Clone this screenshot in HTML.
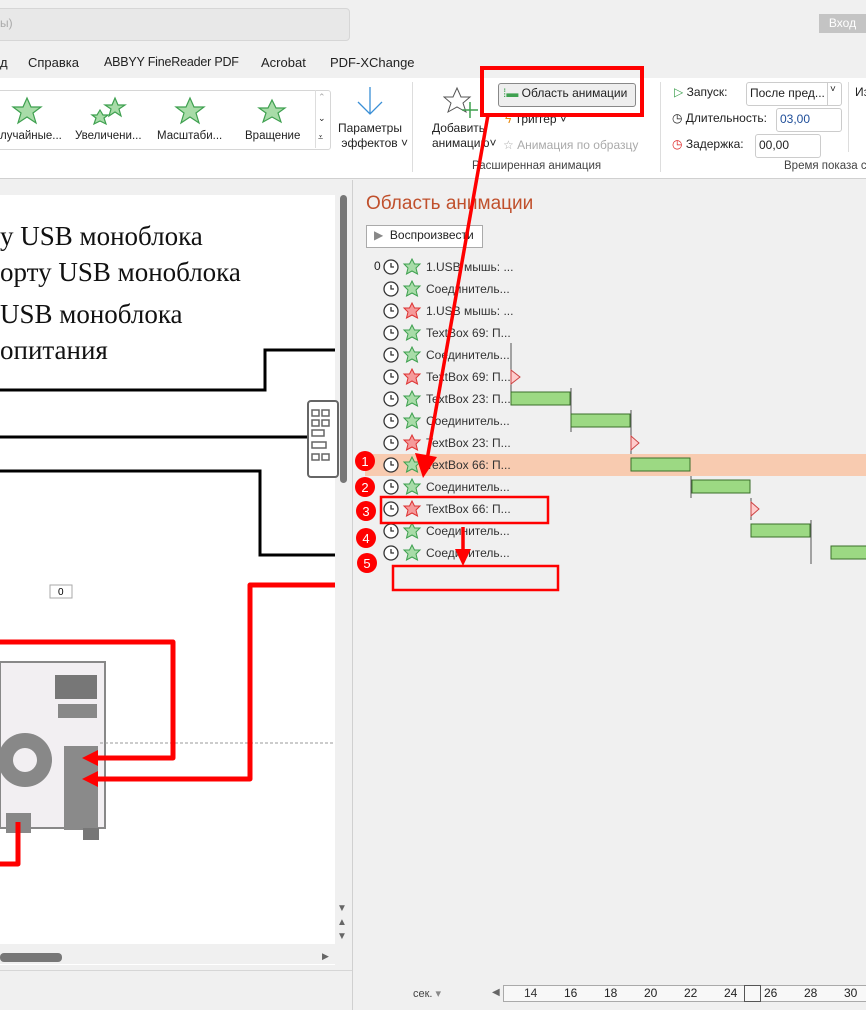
<!DOCTYPE html>
<html><head><meta charset="utf-8"><style>
body{margin:0;width:866px;height:1010px;position:relative;overflow:hidden;background:#f0f0f0;font-family:"Segoe UI","Liberation Sans","DejaVu Sans",sans-serif;font-size:12px;color:#222}
.a{position:absolute;white-space:nowrap}
</style></head><body>
<div class="a" style="left:-10px;top:8px;width:358px;height:31px;background:#e8e8e8;border:1px solid #d6d6d6;border-radius:4px"></div>
<div class="a" style="left:0;top:16px;color:#aaa;font-size:12px">ы)</div>
<div class="a" style="left:819px;top:14px;width:47px;height:19px;background:#c4c4c4;color:#fff;font-size:12px;text-align:center;line-height:19px">Вход</div>
<div class="a" style="left:0;top:55px;font-size:13px">д</div>
<div class="a" style="left:28px;top:55px;font-size:13px">Справка</div>
<div class="a" style="left:104px;top:55px;font-size:12.5px;letter-spacing:-0.2px">ABBYY FineReader PDF</div>
<div class="a" style="left:261px;top:55px;font-size:13px">Acrobat</div>
<div class="a" style="left:330px;top:55px;font-size:13px">PDF-XChange</div>
<div class="a" style="left:0;top:78px;width:866px;height:100px;background:#fff;border-bottom:1px solid #d0d0d0"></div>
<div class="a" style="left:-5px;top:90px;width:334px;height:58px;border:1px solid #d6d6d6;border-radius:3px;background:#fff"></div>
<div class="a" style="left:315px;top:90px;width:14px;height:58px;border-left:1px solid #ddd"></div>
<div class="a" style="left:318px;top:92px;font-size:9px;color:#aaa">⌃</div>
<div class="a" style="left:318px;top:113px;font-size:9px">⌄</div>
<div class="a" style="left:318px;top:132px;font-size:9px">⩡</div>
<svg class="a" style="left:0;top:95px" width="310" height="35" viewBox="0 0 310 35">
<g fill="#a8dca8" stroke="#3ea04f" stroke-width="1.2">
<polygon points="27,3 31,12 41,12 33,18 36,28 27,22 18,28 21,18 13,12 23,12"/>
<polygon points="115,3 118,10 125,10 119,14 121,21 115,17 109,21 111,14 105,10 112,10"/>
<polygon points="100,15 103,20 108,20 104,23 106,29 100,26 94,29 96,23 92,20 97,20"/>
<polygon points="190,3 194,12 204,12 196,18 199,28 190,22 181,28 184,18 176,12 186,12"/>
<polygon points="272,5 276,13 285,13 278,18 281,27 272,22 263,27 266,18 259,13 268,13"/>
</g></svg>
<div class="a" style="left:0;top:130px;font-size:11.5px">лучайные...</div>
<div class="a" style="left:75px;top:130px;font-size:11.5px">Увеличени...</div>
<div class="a" style="left:157px;top:130px;font-size:11.5px">Масштаби...</div>
<div class="a" style="left:245px;top:130px;font-size:11.5px">Вращение</div>
<svg class="a" style="left:355px;top:86px" width="30" height="30"><path d="M15 1V28M3 16L15 28L27 16" stroke="#3a8fd6" fill="none" stroke-width="1.3"/></svg>
<div class="a" style="left:338px;top:121px;font-size:12px;line-height:15px">Параметры<br>&nbsp;эффектов ˅</div>
<div class="a" style="left:412px;top:82px;width:1px;height:90px;background:#ddd"></div>
<svg class="a" style="left:443px;top:86px" width="36" height="34"><polygon points="14,2 18,11 27,11 20,17 23,26 14,21 5,26 8,17 1,11 10,11" fill="none" stroke="#555"/><path d="M27 16V32M19 24H35" stroke="#3ea04f" stroke-width="1.5"/></svg>
<div class="a" style="left:432px;top:121px;font-size:12px;line-height:15px">Добавить<br>анимацию˅</div>
<div class="a" style="left:498px;top:83px;width:136px;height:22px;border:1px solid #888;border-radius:3px;background:#eee"></div>
<div class="a" style="left:503px;top:86px;font-size:12px"><span style="color:#3ea04f">⁞▬</span> Область анимации</div>
<div class="a" style="left:505px;top:112px;font-size:12px"><span style="color:#e98a10">ϟ</span> Триггер ˅</div>
<div class="a" style="left:503px;top:138px;font-size:12px;color:#aaa">☆ Анимация по образцу</div>
<div class="a" style="left:472px;top:160px;font-size:11.5px;color:#444">Расширенная анимация</div>
<div class="a" style="left:660px;top:82px;width:1px;height:90px;background:#ddd"></div>
<div class="a" style="left:674px;top:85px;font-size:12px"><span style="color:#3ea04f">▷</span> Запуск:</div>
<div class="a" style="left:746px;top:82px;width:94px;height:22px;border:1px solid #ccc;border-radius:3px;background:#fff"></div>
<div class="a" style="left:750px;top:86px;font-size:12px">После пред...</div>
<div class="a" style="left:827px;top:82px;width:1px;height:23px;background:#ccc"></div>
<div class="a" style="left:830px;top:84px;font-size:10px">˅</div>
<div class="a" style="left:672px;top:111px;font-size:12px">◷ Длительность:</div>
<div class="a" style="left:776px;top:108px;width:64px;height:22px;border:1px solid #ccc;border-radius:3px;background:#fff"></div>
<div class="a" style="left:780px;top:112px;font-size:12px;color:#1f4e99">03,00</div>
<div class="a" style="left:672px;top:137px;font-size:12px"><span style="color:#d22">◷</span> Задержка:</div>
<div class="a" style="left:755px;top:134px;width:64px;height:22px;border:1px solid #ccc;border-radius:3px;background:#fff"></div>
<div class="a" style="left:759px;top:138px;font-size:12px">00,00</div>
<div class="a" style="left:784px;top:160px;font-size:11.5px;color:#444">Время показа с</div>
<div class="a" style="left:848px;top:82px;width:1px;height:70px;background:#ddd"></div>
<div class="a" style="left:855px;top:85px;font-size:12px">Из</div>
<div class="a" style="left:0;top:195px;width:335px;height:770px;background:#fff"></div>
<div class="a" style="left:337px;top:182px;width:12px;height:785px;background:#f0f0f0"></div>
<div class="a" style="left:340px;top:195px;width:7px;height:288px;background:#777;border-radius:4px"></div>
<div class="a" style="left:352px;top:180px;width:1px;height:830px;background:#d0d0d0"></div>
<div class="a" style="left:0;top:944px;width:335px;height:20px;background:#f0f0f0"></div>
<div class="a" style="left:0;top:953px;width:62px;height:9px;background:#777;border-radius:4px"></div>
<div class="a" style="left:0;top:970px;width:352px;height:1px;background:#d6d6d6"></div>
<div class="a" style="left:322px;top:951px;font-size:9px;color:#666">▶</div>
<div class="a" style="left:337px;top:902px;font-size:10px;color:#666;line-height:14px">▼<br>▲<br>▼</div>
<div class="a" style="left:0;top:218px;font-family:'Liberation Serif',serif;font-size:27px;line-height:36px;color:#111">у USB моноблока<br>орту USB моноблока</div>
<div class="a" style="left:0;top:296px;font-family:'Liberation Serif',serif;font-size:27px;line-height:36px;color:#111">USB моноблока<br>опитания</div>
<svg class="a" style="left:0;top:0" width="866" height="1010">
<g stroke="#000" stroke-width="3" fill="none">
<path d="M0 390H265V350H335"/><path d="M0 437H308"/><path d="M0 471H260V555H335"/></g>
<rect x="308" y="401" width="30" height="76" rx="3" fill="#fff" stroke="#666" stroke-width="2"/>
<g fill="none" stroke="#666" stroke-width="1.5"><rect x="312" y="410" width="7" height="6"/><rect x="322" y="410" width="7" height="6"/><rect x="312" y="420" width="7" height="6"/><rect x="322" y="420" width="7" height="6"/><rect x="312" y="430" width="12" height="6"/><rect x="312" y="442" width="14" height="6"/><rect x="312" y="454" width="7" height="6"/><rect x="322" y="454" width="7" height="6"/></g>
<rect x="50" y="585" width="22" height="13" fill="#fff" stroke="#aaa"/>
<text x="58" y="595" font-size="10" font-family="Liberation Sans">0</text>
<rect x="0" y="662" width="105" height="166" fill="#f2eff2" stroke="#888" stroke-width="2"/>
<rect x="55" y="675" width="42" height="24" fill="#777"/>
<rect x="58" y="704" width="39" height="14" fill="#888"/>
<rect x="64" y="746" width="34" height="84" fill="#8a8a8a"/>
<circle cx="25" cy="760" r="27" fill="#888"/><circle cx="25" cy="760" r="12" fill="#f2eff2"/>
<rect x="6" y="813" width="25" height="20" fill="#888"/>
<rect x="83" y="828" width="16" height="12" fill="#777"/>
<path d="M100 743H335" stroke="#999" stroke-dasharray="3,2"/>
<g stroke="#f00" stroke-width="5" fill="none" stroke-linejoin="round">
<path d="M0 642H173V758H92"/><path d="M335 585H250V779H92"/><path d="M18 822V864H0"/></g>
<polygon points="82,758 98,750 98,766" fill="#f00"/><polygon points="82,779 98,771 98,787" fill="#f00"/>
</svg>
<div class="a" style="left:366px;top:193px;font-size:19px;color:#c0502c">Область анимации</div>
<div class="a" style="left:366px;top:225px;width:115px;height:21px;border:1px solid #aaa;background:#fff"></div>
<div class="a" style="left:374px;top:228px;font-size:12px"><span style="color:#888">▶</span>&nbsp; Воспроизвести</div>
<div class="a" style="left:365px;top:454px;width:501px;height:22px;background:#f8cbb0"></div>
<div class="a" style="left:374px;top:259px;font-size:12px">0</div>
<svg class="a" style="left:0;top:0" width="866" height="1010">
<defs><g id="c"><circle r="7" fill="#fff" stroke="#333" stroke-width="1.3"/><path d="M0 -4V0H3" stroke="#333" fill="none" stroke-width="1.3"/></g>
<polygon id="g" points="0,-8 2.5,-3 8,-3 4,1 5.5,7 0,4 -5.5,7 -4,1 -8,-3 -2.5,-3" fill="#a8dca8" stroke="#3ea04f"/>
<polygon id="r" points="0,-8 2.5,-3 8,-3 4,1 5.5,7 0,4 -5.5,7 -4,1 -8,-3 -2.5,-3" fill="#f59a9a" stroke="#d33"/></defs>
<g><use href="#c" x="391" y="267"/><use href="#g" x="412" y="267"/>
<use href="#c" x="391" y="289"/><use href="#g" x="412" y="289"/>
<use href="#c" x="391" y="311"/><use href="#r" x="412" y="311"/>
<use href="#c" x="391" y="333"/><use href="#g" x="412" y="333"/>
<use href="#c" x="391" y="355"/><use href="#g" x="412" y="355"/>
<use href="#c" x="391" y="377"/><use href="#r" x="412" y="377"/>
<use href="#c" x="391" y="399"/><use href="#g" x="412" y="399"/>
<use href="#c" x="391" y="421"/><use href="#g" x="412" y="421"/>
<use href="#c" x="391" y="443"/><use href="#r" x="412" y="443"/>
<use href="#c" x="391" y="465"/><use href="#g" x="412" y="465"/>
<use href="#c" x="391" y="487"/><use href="#g" x="412" y="487"/>
<use href="#c" x="391" y="509"/><use href="#r" x="412" y="509"/>
<use href="#c" x="391" y="531"/><use href="#g" x="412" y="531"/>
<use href="#c" x="391" y="553"/><use href="#g" x="412" y="553"/></g>
<g font-family="Liberation Sans" font-size="12" fill="#333">
<text x="426" y="271">1.USB мышь: ...</text><text x="426" y="293">Соединитель...</text><text x="426" y="315">1.USB мышь: ...</text><text x="426" y="337">TextBox 69: П...</text><text x="426" y="359">Соединитель...</text><text x="426" y="381">TextBox 69: П...</text><text x="426" y="403">TextBox 23: П...</text><text x="426" y="425">Соединитель...</text><text x="426" y="447">TextBox 23: П...</text><text x="426" y="469">TextBox 66: П...</text><text x="426" y="491">Соединитель...</text><text x="426" y="513">TextBox 66: П...</text><text x="426" y="535">Соединитель...</text><text x="426" y="557">Соединитель...</text></g>
<g stroke="#555"><path d="M511 343V405M571 388V432M631 410V454M691 476V498M751 498V520M811 520V564"/></g>
<g fill="#9cd983" stroke="#3a6e2a" stroke-width="1"><rect x="511" y="392" width="59" height="13"/><rect x="571" y="414" width="59" height="13"/><rect x="631" y="458" width="59" height="13"/><rect x="692" y="480" width="58" height="13"/><rect x="751" y="524" width="59" height="13"/><rect x="831" y="546" width="40" height="13"/></g>
<g fill="#fcc" stroke="#c44"><polygon points="511,370 520,377 511,384"/><polygon points="631,436 639,443 631,450"/><polygon points="751,502 759,509 751,516"/></g>
<g fill="#f00" stroke="none"><circle cx="365" cy="461" r="10"/><circle cx="365" cy="487" r="10"/><circle cx="366" cy="511" r="10"/><circle cx="366" cy="538" r="10"/><circle cx="367" cy="563" r="10"/></g>
<g fill="#fff" font-family="Liberation Sans" font-size="13" text-anchor="middle"><text x="365" y="466">1</text><text x="365" y="492">2</text><text x="366" y="516">3</text><text x="366" y="543">4</text><text x="367" y="568">5</text></g>
<rect x="482" y="68" width="160" height="47" fill="none" stroke="#f00" stroke-width="4"/>
<path d="M488 115L427 460" stroke="#f00" stroke-width="3.5"/><polygon points="423,478 415,453 437,457" fill="#f00"/>
<rect x="381" y="497" width="167" height="26" fill="none" stroke="#f00" stroke-width="2.5"/>
<path d="M463 527V552" stroke="#f00" stroke-width="3.5"/><polygon points="463,566 455,549 471,549" fill="#f00"/>
<rect x="393" y="566" width="165" height="24" fill="none" stroke="#f00" stroke-width="2.5"/>
</svg>
<div class="a" style="left:413px;top:987px;font-size:11px;color:#444">сек. <span style="color:#888">▾</span></div>
<div class="a" style="left:492px;top:987px;font-size:10px;color:#666">◀</div>
<div class="a" style="left:503px;top:985px;width:363px;height:15px;border:1px solid #aaa;background:#f8f8f8"></div>
<div class="a" style="left:744px;top:985px;width:15px;height:15px;border:1px solid #555"></div>
<div class="a" style="left:524px;top:986px;font-size:12px;color:#333">14</div>
<div class="a" style="left:564px;top:986px;font-size:12px">16</div>
<div class="a" style="left:604px;top:986px;font-size:12px">18</div>
<div class="a" style="left:644px;top:986px;font-size:12px">20</div>
<div class="a" style="left:684px;top:986px;font-size:12px">22</div>
<div class="a" style="left:724px;top:986px;font-size:12px">24</div>
<div class="a" style="left:764px;top:986px;font-size:12px">26</div>
<div class="a" style="left:804px;top:986px;font-size:12px">28</div>
<div class="a" style="left:844px;top:986px;font-size:12px">30</div>
</body></html>
